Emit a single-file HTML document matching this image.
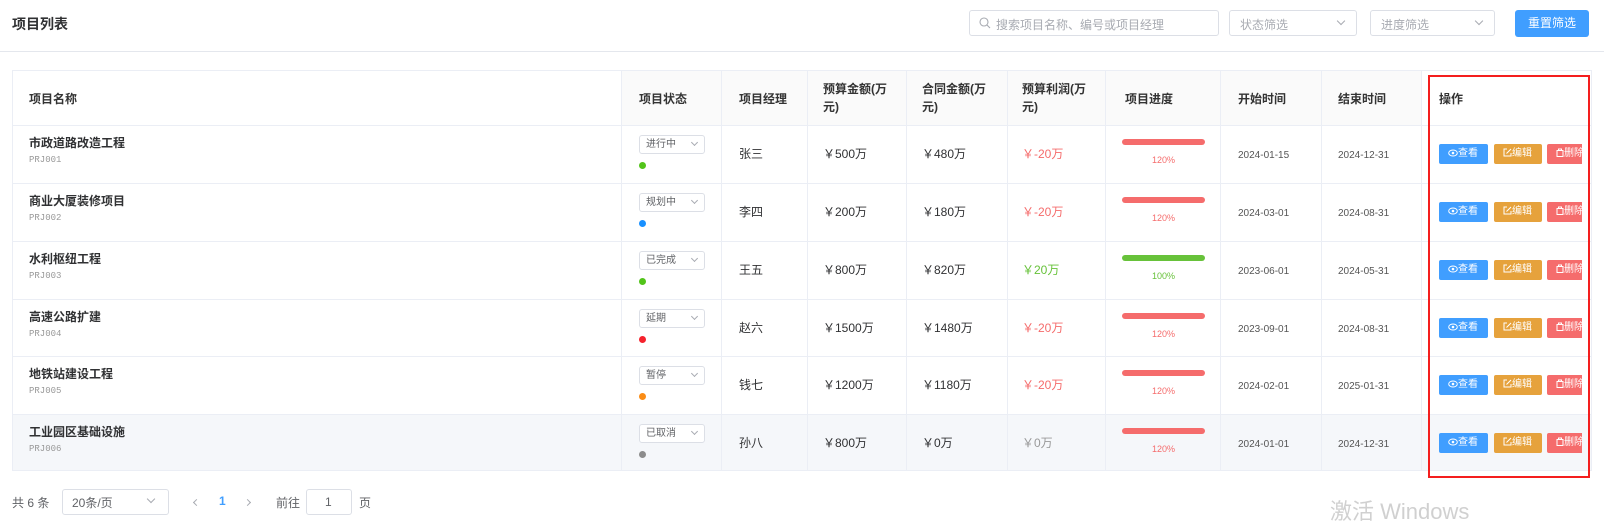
<!DOCTYPE html>
<html><head><meta charset="utf-8"><style>
*{margin:0;padding:0;box-sizing:border-box}
body{width:1604px;height:509px;overflow:hidden;background:#fff;font-family:"Liberation Sans","Noto Sans CJK SC",sans-serif;color:#303133;position:relative}
.a{position:absolute;white-space:nowrap}
.hdr{position:absolute;left:0;top:0;width:1604px;height:52px;border-bottom:1px solid #e4e7ed}
.inp{position:absolute;border:1px solid #dcdfe6;border-radius:3px;background:#fff;font-size:12px;color:#a8abb2}
.chev{position:absolute;width:6px;height:6px;border-right:1px solid #a8abb2;border-bottom:1px solid #a8abb2;transform:rotate(45deg)}
.tbl{position:absolute;left:12px;top:70px;width:1580px;height:401px;border:1px solid #ebeef5}
.hl{position:absolute;background:#ebeef5}
.th{font-size:12px;font-weight:bold;color:#333}
.nm{font-size:12px;font-weight:bold;color:#303133}
.cd{font-family:"Liberation Mono",monospace;font-size:9px;color:#999}
.sel{position:absolute;width:66px;height:19px;border:1px solid #dcdfe6;border-radius:3px;background:#fff;font-size:10px;color:#606266;padding-left:6px;line-height:18px}
.sel i{position:absolute;right:7px;top:4px;width:5px;height:5px;border-right:1px solid #a8abb2;border-bottom:1px solid #a8abb2;transform:rotate(45deg)}
.dot{position:absolute;width:7px;height:7px;border-radius:50%}
.t{font-size:12px;color:#303133}
.bar{position:absolute;left:1122px;width:83px;height:6px;border-radius:3px}
.pct{font-size:9px;width:83px;text-align:center;left:1122px}
.dt{font-size:10px;color:#555}
.btn{position:absolute;height:20px;border-radius:2px;color:#fff;font-size:10px;line-height:20px;overflow:hidden;white-space:nowrap}
.arr{position:absolute;width:5px;height:5px;border-left:1px solid #a8abb2;border-bottom:1px solid #a8abb2}
</style></head><body>
<div class="hdr"></div>
<div class="a" style="left:12px;top:14px;font-size:14px;font-weight:bold;color:#303133">项目列表</div>
<div class="inp" style="left:969px;top:10px;width:250px;height:26px"><svg class="a" style="left:9px;top:6px" width="12" height="12" viewBox="0 0 12 12"><circle cx="5" cy="5" r="4" fill="none" stroke="#a8abb2" stroke-width="1.1"/><path d="M8 8l3 3" stroke="#a8abb2" stroke-width="1.1"/></svg><span class="a" style="left:26px;top:5px">搜索项目名称、编号或项目经理</span></div>
<div class="inp" style="left:1229px;top:10px;width:128px;height:26px"><span class="a" style="left:10px;top:5px">状态筛选</span><i class="chev" style="left:108px;top:7px"></i></div>
<div class="inp" style="left:1370px;top:10px;width:125px;height:26px"><span class="a" style="left:10px;top:5px">进度筛选</span><i class="chev" style="left:105px;top:7px"></i></div>
<div class="a" style="left:1515px;top:10px;width:74px;height:27px;background:#409eff;border-radius:3px;color:#fff;font-size:12px;text-align:center;line-height:27px">重置筛选</div>

<div class="tbl"></div>
<div class="a" style="left:621px;top:71px;width:800px;height:54px;background:#fafafa"></div>
<div class="a" style="left:13px;top:414px;width:1578px;height:56px;background:#f5f7fa"></div>
<div class="hl" style="left:12px;top:125px;width:1580px;height:1px"></div>
<div class="hl" style="left:12px;top:183px;width:1580px;height:1px"></div>
<div class="hl" style="left:12px;top:241px;width:1580px;height:1px"></div>
<div class="hl" style="left:12px;top:299px;width:1580px;height:1px"></div>
<div class="hl" style="left:12px;top:356px;width:1580px;height:1px"></div>
<div class="hl" style="left:12px;top:414px;width:1580px;height:1px"></div>
<div class="hl" style="left:621px;top:70px;width:1px;height:401px"></div>
<div class="hl" style="left:721px;top:70px;width:1px;height:401px"></div>
<div class="hl" style="left:807px;top:70px;width:1px;height:401px"></div>
<div class="hl" style="left:906px;top:70px;width:1px;height:401px"></div>
<div class="hl" style="left:1007px;top:70px;width:1px;height:401px"></div>
<div class="hl" style="left:1105px;top:70px;width:1px;height:401px"></div>
<div class="hl" style="left:1220px;top:70px;width:1px;height:401px"></div>
<div class="hl" style="left:1321px;top:70px;width:1px;height:401px"></div>
<div class="hl" style="left:1421px;top:70px;width:1px;height:401px"></div>

<div class="a th" style="left:29px;top:90px">项目名称</div>
<div class="a th" style="left:639px;top:90px">项目状态</div>
<div class="a th" style="left:739px;top:90px">项目经理</div>
<div class="a th" style="left:823px;top:80px;line-height:18px;white-space:normal;width:70px">预算金额(万元)</div>
<div class="a th" style="left:922px;top:80px;line-height:18px;white-space:normal;width:70px">合同金额(万元)</div>
<div class="a th" style="left:1022px;top:80px;line-height:18px;white-space:normal;width:74px">预算利润(万元)</div>
<div class="a th" style="left:1125px;top:90px">项目进度</div>
<div class="a th" style="left:1238px;top:90px">开始时间</div>
<div class="a th" style="left:1338px;top:90px">结束时间</div>
<div class="a th" style="left:1439px;top:90px">操作</div>

<div id="rows"></div>
<script>
var R=[
["市政道路改造工程","PRJ001","进行中","#52c41a","张三","500","480","￥-20万","#f56c6c","#f56c6c","120%","2024-01-15","2024-12-31",125],
["商业大厦装修项目","PRJ002","规划中","#1890ff","李四","200","180","￥-20万","#f56c6c","#f56c6c","120%","2024-03-01","2024-08-31",183],
["水利枢纽工程","PRJ003","已完成","#52c41a","王五","800","820","￥20万","#67c23a","#67c23a","100%","2023-06-01","2024-05-31",241],
["高速公路扩建","PRJ004","延期","#f5222d","赵六","1500","1480","￥-20万","#f56c6c","#f56c6c","120%","2023-09-01","2024-08-31",299],
["地铁站建设工程","PRJ005","暂停","#fa8c16","钱七","1200","1180","￥-20万","#f56c6c","#f56c6c","120%","2024-02-01","2025-01-31",356],
["工业园区基础设施","PRJ006","已取消","#8c8c8c","孙八","800","0","￥0万","#999","#f56c6c","120%","2024-01-01","2024-12-31",414]];
var h="";
R.forEach(function(r){var y=r[13];
h+='<div class="a nm" style="left:29px;top:'+(y+9)+'px">'+r[0]+'</div>';
h+='<div class="a cd" style="left:29px;top:'+(y+30)+'px">'+r[1]+'</div>';
h+='<div class="sel" style="left:639px;top:'+(y+10)+'px">'+r[2]+'<i></i></div>';
h+='<div class="dot" style="left:639px;top:'+(y+37)+'px;background:'+r[3]+'"></div>';
h+='<div class="a t" style="left:739px;top:'+(y+20)+'px">'+r[4]+'</div>';
h+='<div class="a t" style="left:823px;top:'+(y+20)+'px">￥'+r[5]+'万</div>';
h+='<div class="a t" style="left:922px;top:'+(y+20)+'px">￥'+r[6]+'万</div>';
h+='<div class="a t" style="left:1022px;top:'+(y+20)+'px;color:'+r[8]+'">'+r[7]+'</div>';
h+='<div class="bar" style="top:'+(y+14)+'px;background:'+r[9]+'"></div>';
h+='<div class="a pct" style="top:'+(y+30)+'px;color:'+r[9]+'">'+r[10]+'</div>';
h+='<div class="a dt" style="left:1238px;top:'+(y+25)+'px">'+r[11]+'</div>';
h+='<div class="a dt" style="left:1338px;top:'+(y+25)+'px">'+r[12]+'</div>';
h+='<div class="btn" style="left:1439px;top:'+(y+19)+'px;width:49px;background:#409eff;padding-left:9px"><svg width="10" height="8" viewBox="0 0 10 8" style="vertical-align:-1px"><ellipse cx="5" cy="4" rx="4.3" ry="3" fill="none" stroke="#fff"/><circle cx="5" cy="4" r="1.3" fill="#fff"/></svg>查看</div>';
h+='<div class="btn" style="left:1494px;top:'+(y+19)+'px;width:48px;background:#e6a23c;padding-left:9px"><svg width="9" height="9" viewBox="0 0 9 9" style="vertical-align:-1px"><path d="M4 1H1v7h7V5M3.5 5.5L8 1" fill="none" stroke="#fff"/></svg>编辑</div>';
h+='<div class="btn" style="left:1547px;top:'+(y+19)+'px;width:35px;background:#f56c6c;padding-left:9px;border-radius:2px 0 0 2px"><svg width="8" height="9" viewBox="0 0 8 9" style="vertical-align:-1px"><path d="M1 2.5h6v6H1zM2.5 2.5V1h3v1.5" fill="none" stroke="#fff"/></svg>删除</div>';
});
document.getElementById("rows").innerHTML=h;
</script>

<div class="a" style="left:1428px;top:75px;width:162px;height:403px;border:2px solid #f41e1e"></div>

<div class="a" style="left:12px;top:494px;font-size:12px;color:#606266">共 6 条</div>
<div class="inp" style="left:62px;top:489px;width:107px;height:26px"><span class="a" style="left:9px;top:4px;color:#606266;font-size:12px">20条/页</span><i class="chev" style="left:85px;top:6px"></i></div>
<div class="arr" style="left:194px;top:500px;transform:rotate(45deg)"></div>
<div class="a" style="left:219px;top:494px;font-size:12px;font-weight:bold;color:#409eff">1</div>
<div class="arr" style="left:245px;top:500px;transform:rotate(-135deg)"></div>
<div class="a" style="left:276px;top:494px;font-size:12px;color:#606266">前往</div>
<div class="inp" style="left:306px;top:489px;width:46px;height:26px"><span class="a" style="left:18px;top:5px;color:#606266;font-size:12px">1</span></div>
<div class="a" style="left:359px;top:494px;font-size:12px;color:#606266">页</div>
<div class="a" style="left:1330px;top:494px;font-size:22px;color:#d0d0d0">激活 Windows</div>
</body></html>
